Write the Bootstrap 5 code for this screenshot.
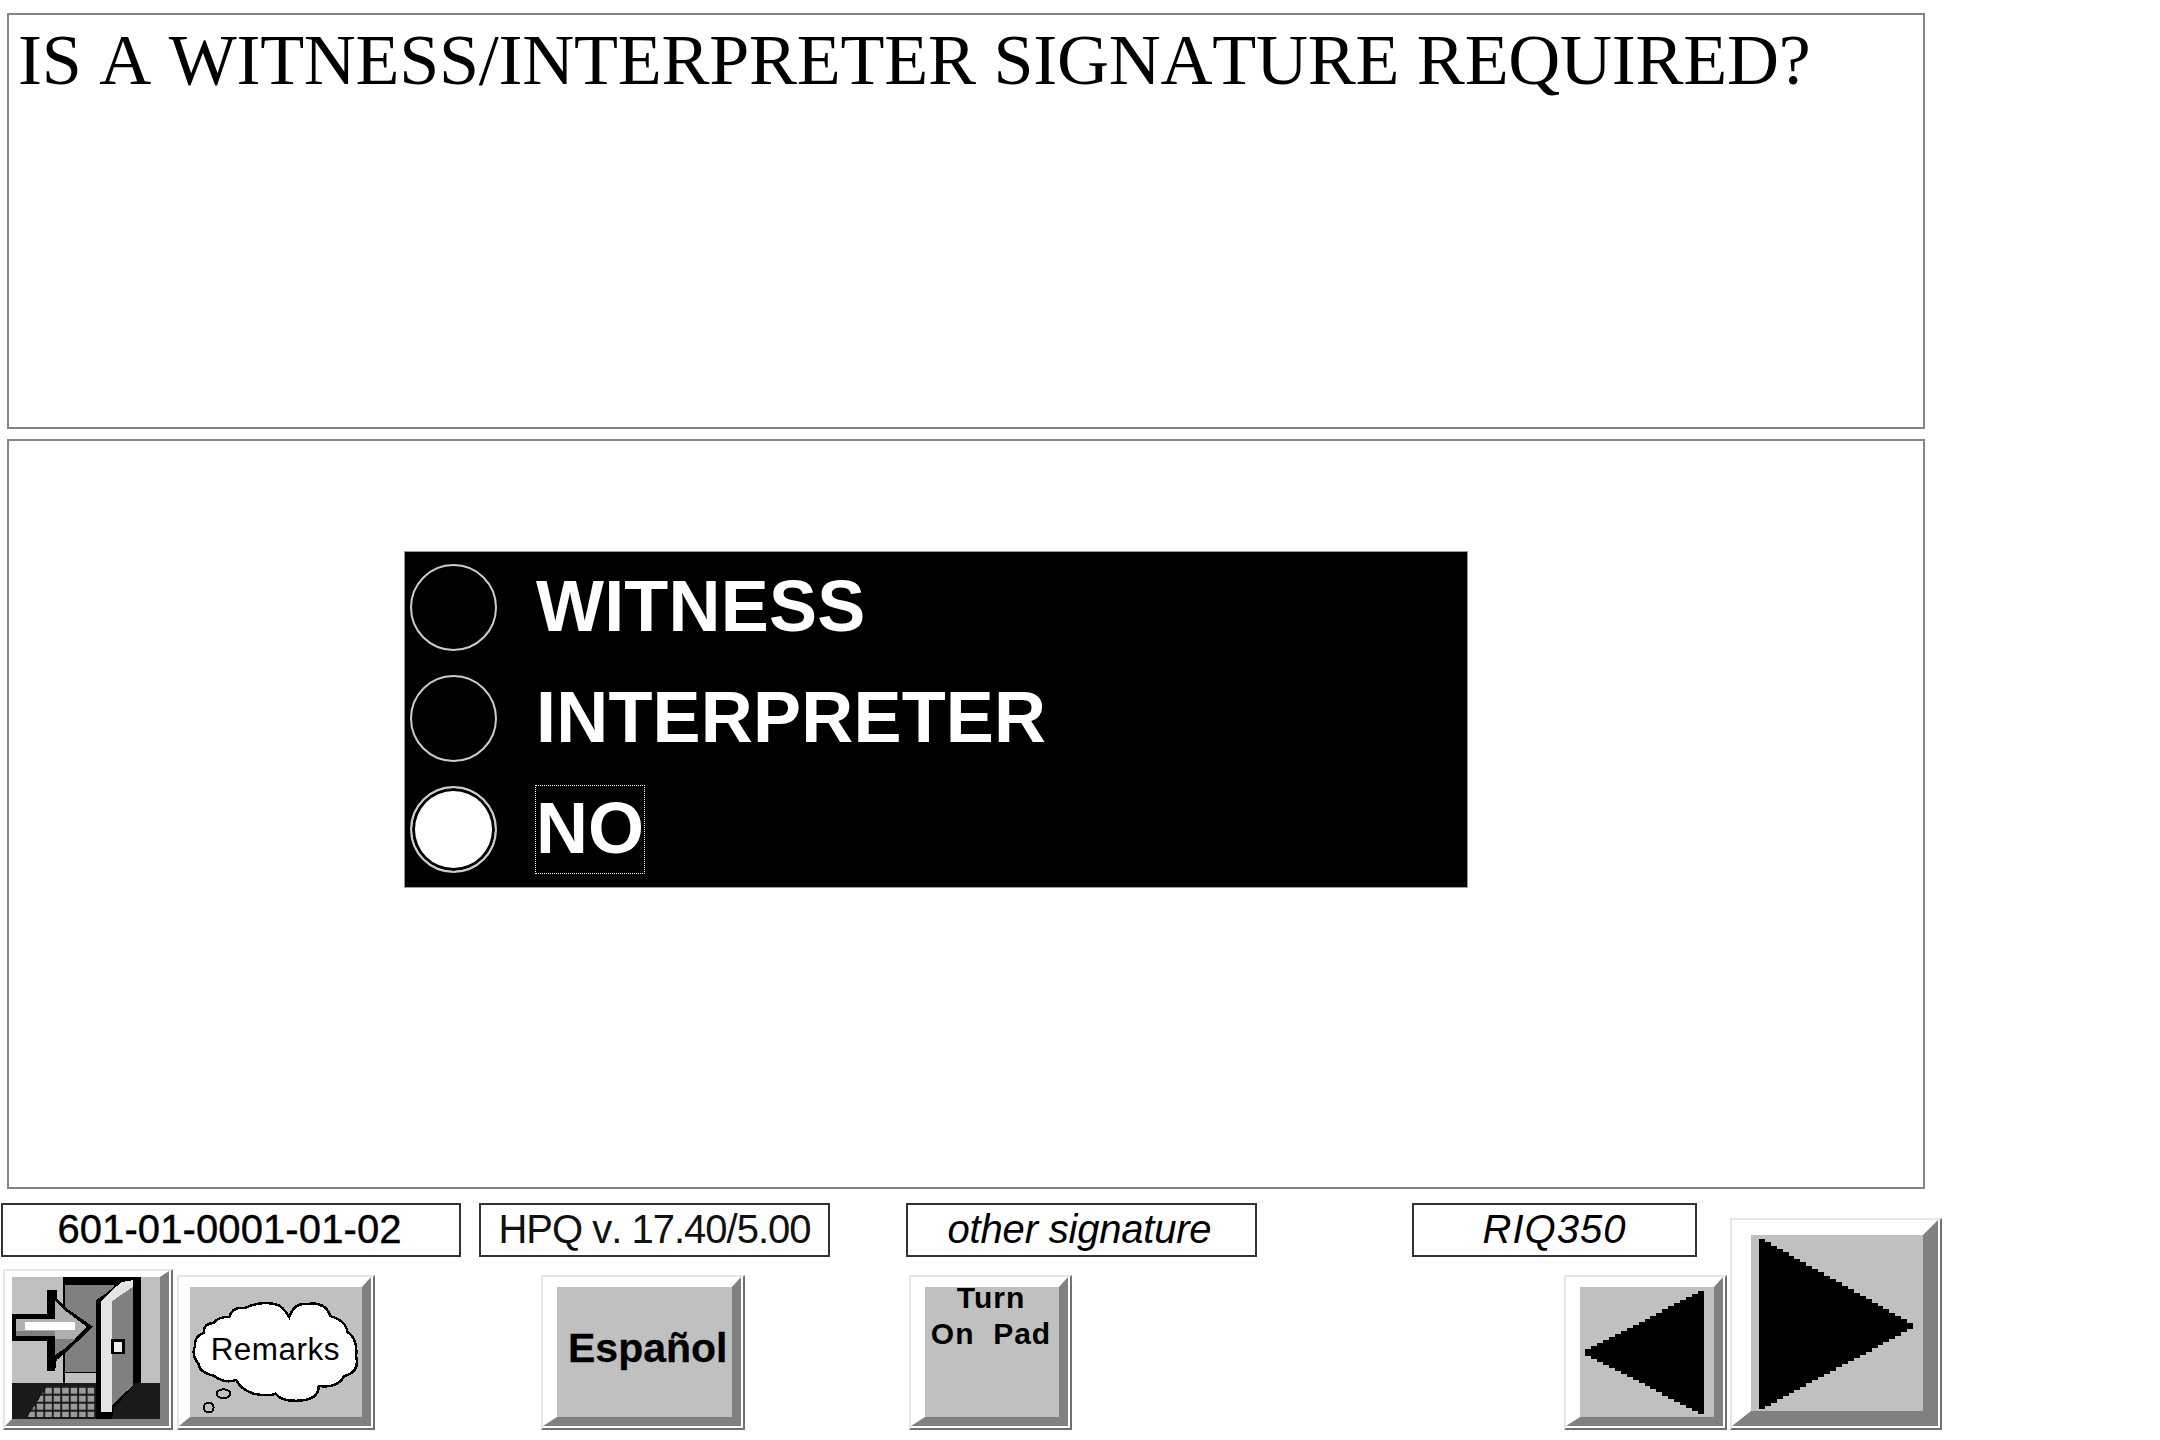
<!DOCTYPE html>
<html lang="en">
<head>
<meta charset="utf-8">
<title>HPQ</title>
<link href="https://cdn.jsdelivr.net/npm/bootstrap@5.3.0/dist/css/bootstrap.min.css" rel="stylesheet">
<style>
html,body{background:#fff;margin:0;font-family:"Liberation Sans",Arial,sans-serif;color:#000;font-kerning:none}
.screen{width:2160px;height:1440px;padding-top:13px;overflow:hidden}
.frame-box{margin-left:7px;width:1918px;border:2px solid #858585;background:#fff}
.q-box{height:416px;padding:0 0 0 9px;white-space:nowrap}
.q-title{font:72px/1 "Liberation Serif","Times New Roman",serif;font-kerning:none;letter-spacing:-.26px;margin:9px 0 0}
.a-box{height:750px;margin-top:10px;padding:110px 0 0 395px}
.opt-panel{width:1064px;height:337px;background:#000;border:1px solid #999;padding:0 0 0 5px;color:#fff;font-weight:700;font-size:72px;line-height:1}
.opt-row{height:111px;gap:38px}
.opt-dot{width:87px;height:87px;border-radius:50%;border:2px solid #ccc;flex:none}
.opt-dot.is-on{background:#fff;box-shadow:inset 0 0 0 3px #000}
.opt-text{display:block;padding:0 2px;border:1px solid transparent;height:89px;line-height:85px;margin-left:-2px;letter-spacing:.2px}
.opt-text.is-focus{border:1px dotted #fff;padding:0;margin-left:0;letter-spacing:0}
.foot{height:227px;margin-top:14px}
.foot-left{width:1727px}
.tag-row{height:54px;padding-left:1px}
.tag{height:54px;border:2px solid #333;background:#fff;font-size:40px;line-height:48px;text-align:center;white-space:nowrap;-webkit-text-stroke:.4px #000}
.tag-a{width:460px;letter-spacing:.1px;padding-right:3px}
.tag-b{width:351px;margin-left:18px;-webkit-text-stroke:0;color:#111;letter-spacing:-1px}
.tag-c{width:351px;margin-left:76px;font-style:italic;-webkit-text-stroke:0;letter-spacing:-.2px;padding-right:4px}
.tag-d{width:285px;margin-left:155px;font-style:italic;-webkit-text-stroke:0;letter-spacing:1px}
.btn-row{height:161px;margin-top:12px;align-items:flex-end}
.bev{display:block;padding:0 2px 2px 0;border:2px solid;border-color:#e6e6e6 #707070 #707070 #e6e6e6;background:#fff;border-radius:0;color:#000;height:155px;flex:none}
.bev-face{display:block;height:100%;width:100%;background:#c0c0c0;border-style:solid;border-width:10px 9px 9px 14px;border-color:#fff #808080 #808080 #fff;font-weight:700}
.bev-exit{width:170px;height:161px;margin-left:3px}
.bev-exit .bev-face{border-width:6px 9px 7px 7px}
.bev-rem{width:198px;margin-left:4px}
.bev-rem .bev-face{border-left-width:11px}
.bev-esp{width:204px;margin-left:166px}
.bev-pad{width:163px;margin-left:164px}
.bev-prev{width:163px;margin-left:492px}
.bev-next{width:212px;height:212px;margin-left:3px}
.bev-next .bev-face{border-width:15px 15px 15px 19px}
.esp-label{font-size:41px;line-height:1;padding:41px 0 0 11px;text-align:left;-webkit-text-stroke:.3px #000}
.pad-label{font-size:30px;line-height:36px;white-space:pre;letter-spacing:1px}
.pad-text{display:block;margin-top:-7px;margin-left:-2px}
svg{display:block}
</style>
</head>
<body>
<div class="screen">
  <div class="frame-box q-box"><h1 class="q-title">IS A WITNESS/INTERPRETER SIGNATURE REQUIRED?</h1></div>
  <div class="frame-box a-box">
    <div class="opt-panel">
      <div class="opt-row d-flex align-items-center"><span class="opt-dot"></span><span class="opt-text">WITNESS</span></div>
      <div class="opt-row d-flex align-items-center"><span class="opt-dot"></span><span class="opt-text">INTERPRETER</span></div>
      <div class="opt-row d-flex align-items-center"><span class="opt-dot is-on"></span><span class="opt-text is-focus">NO</span></div>
    </div>
  </div>
  <div class="foot d-flex align-items-end">
    <div class="foot-left">
      <div class="tag-row d-flex">
        <div class="tag tag-a">601-01-0001-01-02</div>
        <div class="tag tag-b">HPQ v. 17.40/5.00</div>
        <div class="tag tag-c">other signature</div>
        <div class="tag tag-d">RIQ350</div>
      </div>
      <div class="btn-row d-flex">
        <button class="bev bev-exit btn" type="button" aria-label="Exit"><span class="bev-face">
          <svg width="100%" height="100%" viewBox="33 295 454 427" preserveAspectRatio="none" shape-rendering="crispEdges">
            <defs><pattern id="chk" x="80" y="625" width="26" height="24" patternUnits="userSpaceOnUse"><rect width="26" height="24" fill="#1a1a1a"/><rect x="3" y="3" width="19" height="17" fill="#999"/></pattern></defs>
            <rect x="33" y="295" width="454" height="427" fill="#c0c0c0"/>
            <rect x="190" y="295" width="240" height="320" fill="#000"/>
            <rect x="197" y="318" width="150" height="262" fill="#808080"/>
            <rect x="197" y="585" width="95" height="32" fill="#c0c0c0"/>
            <rect x="33" y="615" width="454" height="107" fill="#1a1a1a"/>
            <polygon points="80,715 140,625 290,625 290,715" fill="url(#chk)"/>
            <polygon points="290,365 320,345 365,310 408,295 408,620 345,690 340,722 290,722" fill="#000"/>
            <polygon points="340,345 405,305 405,620 340,680" fill="#808080"/>
            <polygon points="307,368 345,330 370,310 403,305 403,325 340,368 340,700 307,700" fill="#e4e4e4"/>
            <rect x="338" y="482" width="42" height="45" fill="#000"/>
            <rect x="347" y="490" width="24" height="30" fill="#eee"/>
            <polygon points="33,405 140,405 140,335 170,335 170,358 195,385 282,445 195,525 170,545 165,578 140,578 140,488 33,488" fill="#000"/>
            <polygon points="45,420 165,420 165,365 195,395 262,445 195,510 165,530 165,470 45,470" fill="#b0b0b0"/>
            <rect x="72" y="430" width="155" height="25" fill="#fff"/>
            <rect x="45" y="458" width="120" height="14" fill="#808080"/>
            <polygon points="165,480 230,480 195,510 165,530" fill="#808080"/>
          </svg></span></button>
        <button class="bev bev-rem btn" type="button"><span class="bev-face">
          <svg width="100%" height="100%" viewBox="0 0 175 131" font-family="Liberation Sans, Arial, sans-serif">
            <path shape-rendering="crispEdges" d="M5 60 Q4 50 14 46 Q14 36 24 36 Q30 29 40 30 Q43 19 55 21 Q72 13 87 17 Q94 18 101 30 Q106 15 118 17 Q137 13 143 29 Q159 34 160 45 Q171 52 169 70 Q173 86 157 90 Q150 103 131 100 Q131 114 111 115 Q93 116 87 108 Q81 111 65 108 Q51 103 47 94 Q35 98 25 90 Q9 86 9 78 Q1 68 5 60 Z" fill="#fff" stroke="#000" stroke-width="2.5"/>
            <ellipse shape-rendering="crispEdges" cx="34" cy="108" rx="7" ry="4.5" fill="#c0c0c0" stroke="#000" stroke-width="2"/>
            <circle shape-rendering="crispEdges" cx="19" cy="122" r="5" fill="#c0c0c0" stroke="#000" stroke-width="2"/>
            <text x="21" y="74" font-size="32" font-weight="400" fill="#000" textLength="131">Remarks</text>
          </svg></span></button>
        <button class="bev bev-esp btn" type="button"><span class="bev-face esp-label">Español</span></button>
        <button class="bev bev-pad btn" type="button"><span class="bev-face pad-label"><span class="pad-text">Turn
On  Pad</span></span></button>
        <button class="bev bev-prev btn" type="button" aria-label="Previous"><span class="bev-face">
          <svg width="100%" height="100%" viewBox="0 0 133 131" shape-rendering="crispEdges"><polygon id="tri-prev" points="3,66 124,4 124,128" fill="#000"/></svg></span></button>
      </div>
    </div>
    <button class="bev bev-next btn" type="button" aria-label="Next"><span class="bev-face">
      <svg width="100%" height="100%" viewBox="0 0 174 178" shape-rendering="crispEdges"><polygon id="tri-next" points="8,4 165,92 8,176" fill="#000"/></svg></span></button>
  </div>
</div>
<script>
function stairs(x0,x1,yTop,yBot,yTip,stepX){
  var up=[],dn=[],n=Math.round((x1-x0)/stepX),i,x,x2,y;
  for(i=0;i<n;i++){x=x0+i*stepX;x2=x+stepX;y=yTop+(yTip-yTop)*i/n;up.push(x+','+y,x2+','+y);}
  for(i=n-1;i>=0;i--){x=x0+i*stepX;x2=x+stepX;y=yBot-(yBot-yTip)*i/n;dn.push(x2+','+y,x+','+y);}
  return up.concat(dn).join(' ');
}
document.getElementById('tri-next').setAttribute('points',stairs(8,164,4,176,92,6));
var p=stairs(0,120,0,124,62,6).split(' ').map(function(s){var a=s.split(',');return (124-a[0])+','+(+a[1]+4);}).join(' ');
document.getElementById('tri-prev').setAttribute('points',p);
</script>
</body>
</html>
